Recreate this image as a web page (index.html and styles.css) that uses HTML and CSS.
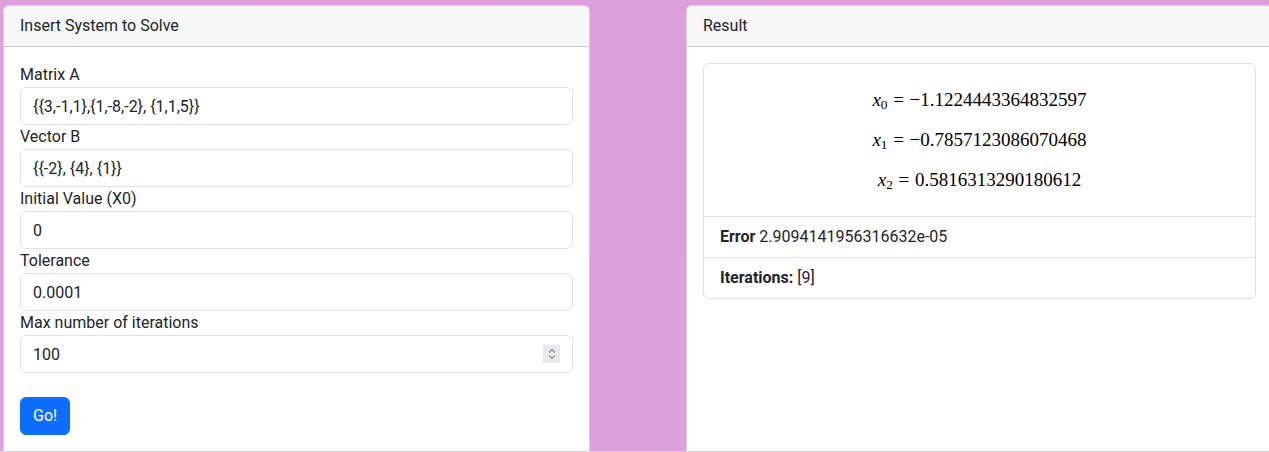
FILE: index.html
```html
<!DOCTYPE html>
<html>
<head>
<meta charset="utf-8">
<title>Solver</title>
<link rel="stylesheet" href="styles.css">
</head>
<body>
<div class="row">
  <div class="card">
    <div class="card-header">Insert System to Solve</div>
    <div class="card-body">
      <form class="form">
        <label class="label">Matrix A</label>
        <input class="input" type="text" value="{{3,-1,1},{1,-8,-2}, {1,1,5}}">
        <label class="label">Vector B</label>
        <input class="input" type="text" value="{{-2}, {4}, {1}}">
        <label class="label">Initial Value (X0)</label>
        <input class="input" type="text" value="0">
        <label class="label">Tolerance</label>
        <input class="input" type="text" value="0.0001">
        <label class="label">Max number of iterations</label>
        <div class="number-wrap">
          <input class="input" type="text" value="100">
          <span class="spinner">
            <svg width="10" height="14" viewBox="0 0 10 14"><path d="M2 5.5 L5 2.5 L8 5.5 M2 8.5 L5 11.5 L8 8.5" fill="none" stroke="#8a8a92" stroke-width="1.2"/></svg>
          </span>
        </div>
        <button class="btn" type="button">Go!</button>
      </form>
    </div>
  </div>
  <div class="card">
    <div class="card-header">Result</div>
    <div class="card-body">
      <div class="list">
        <div class="list-item math-item">
          <div class="math"><i>x</i><sub>0</sub><span class="eq">=</span>−1.1224443364832597</div>
          <div class="math"><i>x</i><sub>1</sub><span class="eq">=</span>−0.7857123086070468</div>
          <div class="math"><i>x</i><sub>2</sub><span class="eq">=</span>0.5816313290180612</div>
        </div>
        <div class="list-item"><b>Error</b> 2.9094141956316632e-05</div>
        <div class="list-item"><b>Iterations:</b> [9]</div>
      </div>
    </div>
  </div>
</div>
</body>
</html>
```
FILE: styles.css
```css
html, body { margin: 0; padding: 0; }
body {
  background: #dda0dd;
  font-family: Roboto, "Liberation Sans", sans-serif;
  font-size: 16px;
  line-height: 24px;
  color: #212529;
  overflow: hidden;
  height: 452px;
}
.row {
  display: flex;
  gap: 96px;
  padding: 5px 0 0 3px;
  height: 446px;
  border-bottom: 1px solid #d6d6d6;
  box-sizing: content-box;
}
.card {
  flex: 0 0 587px;
  width: 587px;
  box-sizing: border-box;
  background: #fff;
  border: 1px solid rgba(0,0,0,.175);
  border-bottom: none;
  border-radius: 6px 6px 0 0;
  display: flex;
  flex-direction: column;
}
.card-header {
  background: #f7f7f7;
  padding: 8px 16px;
  border-bottom: 1px solid rgba(0,0,0,.175);
  border-radius: 5px 5px 0 0;
}
.card-body {
  padding: 16px;
}
.form {
  display: flex;
  flex-direction: column;
  margin: 0;
}
.label { display: block; }
.input {
  display: block;
  width: 100%;
  box-sizing: border-box;
  height: 38px;
  padding: 6px 12px;
  font-family: inherit;
  font-size: 16px;
  line-height: 24px;
  color: #212529;
  border: 1px solid #dee2e6;
  border-radius: 6px;
  background: #fff;
  outline: none;
}
.number-wrap { position: relative; }
.spinner {
  position: absolute;
  right: 13px;
  top: 10px;
  width: 17px;
  height: 18px;
  background: #e9e9ed;
  display: flex;
  align-items: center;
  justify-content: center;
}
.btn {
  align-self: flex-start;
  margin-top: 24px;
  height: 38px;
  padding: 6px 12px;
  font-family: inherit;
  font-size: 16px;
  line-height: 24px;
  color: #fff;
  background: #0d6efd;
  border: 1px solid #0d6efd;
  border-radius: 6px;
}
.list {
  border: 1px solid #dee2e6;
  border-radius: 6px;
}
.list-item {
  padding: 8px 16px;
  border-top: 1px solid #dee2e6;
}
.list-item:first-child { border-top: none; }
.list-item b { font-weight: 700; }
.math-item {
  padding: 24px 16px;
  display: flex;
  flex-direction: column;
  gap: 16px;
}
.math {
  text-align: center;
  font-family: "Liberation Serif", "Times New Roman", serif;
  font-size: 19px;
  line-height: 24px;
  height: 24px;
  color: #000;
}
.math i { font-style: italic; }
.math sub {
  font-size: 0.7em;
  line-height: 0;
  vertical-align: -0.22em;
}
.eq { margin: 0 0.3em; }
```
